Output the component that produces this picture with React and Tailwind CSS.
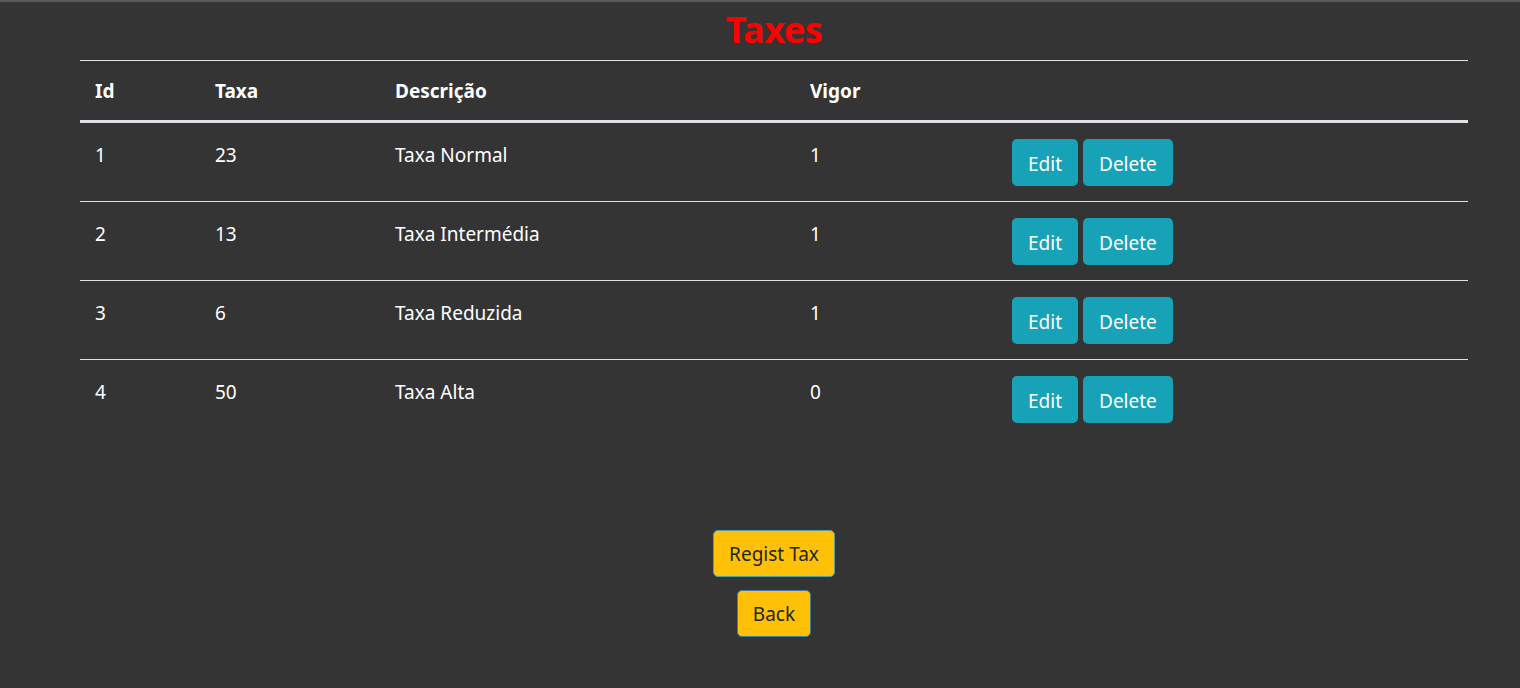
import React from 'react'

const taxes = [
  { id: 1, taxa: 23, descricao: 'Taxa Normal', vigor: 1 },
  { id: 2, taxa: 13, descricao: 'Taxa Intermédia', vigor: 1 },
  { id: 3, taxa: 6, descricao: 'Taxa Reduzida', vigor: 1 },
  { id: 4, taxa: 50, descricao: 'Taxa Alta', vigor: 0 },
]

export default function App() {
  return (
    <div
      className="min-h-[688px] bg-[#343434] border-t-2 border-[#5a5a5a] text-white text-[19px] leading-[30px]"
      style={{ fontFamily: '"Noto Sans", "Open Sans", sans-serif' }}
    >
      <div className="ml-[80px] w-[1388px]">
        <h1 className="text-center text-[36px] leading-[48px] font-bold text-[#ff0000] mt-[4px] mb-[6px] tracking-[-0.5px]">
          Taxes
        </h1>

        <table className="w-full table-fixed border-collapse">
          <thead>
            <tr className="border-t border-[#dee2e6] border-b-[3px] border-b-[#dee2e6]">
              <th className="w-[120px] text-left px-[15px] pt-[15px] pb-[14px] font-bold">Id</th>
              <th className="w-[180px] text-left px-[15px] pt-[15px] pb-[14px] font-bold">Taxa</th>
              <th className="w-[415px] text-left px-[15px] pt-[15px] pb-[14px] font-bold">Descrição</th>
              <th className="w-[202px] text-left px-[15px] pt-[15px] pb-[14px] font-bold">Vigor</th>
              <th className="px-[15px] pt-[15px] pb-[14px]"></th>
            </tr>
          </thead>
          <tbody>
            {taxes.map((t, i) => (
              <tr key={t.id} className={i === 0 ? '' : 'border-t border-[#dee2e6]'}>
                <td className="align-top px-[15px] pt-[17px] pb-[15px]">{t.id}</td>
                <td className="align-top px-[15px] pt-[17px] pb-[15px]">{t.taxa}</td>
                <td className="align-top px-[15px] pt-[17px] pb-[15px]">{t.descricao}</td>
                <td className="align-top px-[15px] pt-[17px] pb-[15px]">{t.vigor}</td>
                <td className="align-top px-[15px] pt-[16px] pb-[15px]">
                  <div className="flex gap-[5px]">
                    <button className="h-[47px] px-[16px] rounded-[5px] bg-[#17a2b8] text-white pt-[2px]">Edit</button>
                    <button className="h-[47px] px-[16px] rounded-[5px] bg-[#17a2b8] text-white pt-[2px]">Delete</button>
                  </div>
                </td>
              </tr>
            ))}
          </tbody>
        </table>

        <div className="flex flex-col items-center gap-[13px] mt-[92px]">
          <button className="h-[47px] px-[15px] rounded-[5px] bg-[#ffc107] border border-[#5f9ea0] text-[#212529]">
            Regist Tax
          </button>
          <button className="h-[47px] px-[15px] rounded-[5px] bg-[#ffc107] border border-[#3f7fa0] text-[#212529]">
            Back
          </button>
        </div>
      </div>
    </div>
  )
}
